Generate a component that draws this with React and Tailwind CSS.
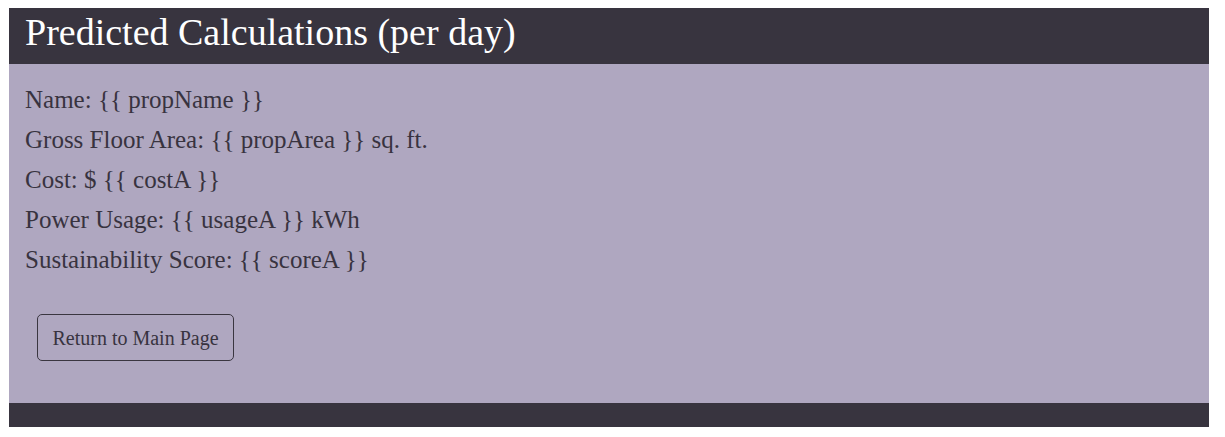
export default function App() {
  const lines = [
    "Name: {{ propName }}",
    "Gross Floor Area: {{ propArea }} sq. ft.",
    "Cost: $ {{ costA }}",
    "Power Usage: {{ usageA }} kWh",
    "Sustainability Score: {{ scoreA }}",
  ];
  return (
    <div className="bg-white w-[1225px] h-[437px] pt-[8px] pl-[9px]" style={{ fontFamily: '"Liberation Serif", serif' }}>
      <div className="w-[1200px] flex flex-col">
        <div className="h-[56px] bg-[#38343f] pt-[5px] pl-[16px]">
          <h1 className="text-white text-[38px] leading-none">Predicted Calculations (per day)</h1>
        </div>
        <div className="bg-[#afa7c0] h-[339px] pt-[16px] pl-[16px] text-[#38333f]">
          {lines.map((l) => (
            <p key={l} className="text-[25px] leading-[40px]">{l}</p>
          ))}
          <button className="mt-[34px] ml-[12px] h-[47px] w-[197px] border border-[#3a3640] rounded-[5px] text-[20px] text-[#38333f] flex items-center justify-center">
            Return to Main Page
          </button>
        </div>
        <div className="h-[24px] bg-[#38343f]" />
      </div>
    </div>
  );
}
